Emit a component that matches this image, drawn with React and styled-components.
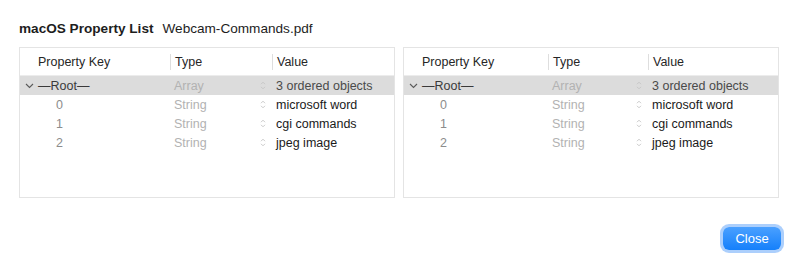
import React from 'react'
import styled, { createGlobalStyle } from 'styled-components'

const GlobalStyle = createGlobalStyle`
    html, body {
        margin: 0;
        padding: 0;
        background: #ffffff;
        font-family: "Liberation Sans", Arial, sans-serif;
        -webkit-font-smoothing: antialiased;
    }
`;

const Window = styled.div`
    width: 798px;
    height: 270px;
    box-sizing: border-box;
    background: #ffffff;
    border-radius: 10px;
    padding: 19px 19px 0 19px;
    display: flex;
    flex-direction: column;
`;

const Title = styled.div`
    display: flex;
    align-items: baseline;
    gap: 9px;
    font-size: 13.6px;
    color: #1d1d1d;
    height: 28px;
    line-height: 20px;

    b {
        font-weight: 700;
    }
`;

const Panels = styled.div`
    display: flex;
    gap: 8px;
`;

const Panel = styled.div`
    flex: 1;
    height: 151px;
    border: 1px solid #e4e4e4;
    box-sizing: border-box;
    background: #fff;
    font-size: 12.5px;
`;

const Row = styled.div`
    display: grid;
    grid-template-columns: ${p => p.$cols};
    align-items: center;
    height: 19px;
    background: ${p => p.$selected ? '#dcdcdc' : 'transparent'};
`;

const Header = styled(Row)`
    height: 28px;
    border-bottom: 1px solid #ececec;
    box-sizing: border-box;
`;

const HeadCell = styled.div`
    color: #262626;
    padding-left: ${p => p.$pad || 4}px;
    border-left: ${p => p.$sep ? '1px solid #dedede' : 'none'};
    line-height: 16px;
`;

const KeyCell = styled.div`
    display: flex;
    align-items: center;
    color: ${p => p.$root ? '#3a3a3a' : '#8c8c8c'};
    padding-left: ${p => p.$indent}px;
`;

const TypeCell = styled.div`
    display: flex;
    align-items: center;
    justify-content: space-between;
    color: #b2b2b2;
    padding: 0 6px 0 4px;
`;

const ValueCell = styled.div`
    color: ${p => p.$dim ? '#4a4a4a' : '#1a1a1a'};
    padding-left: 4px;
`;

const Chevron = styled.svg`
    width: 9px;
    height: 6px;
    margin-right: 4px;
`;

const Stepper = styled.svg`
    width: 6px;
    height: 9px;
`;

const Footer = styled.div`
    display: flex;
    justify-content: flex-end;
    padding-top: 30px;
    margin-right: -2px;
`;

const Button = styled.button`
    font-family: inherit;
    font-size: 13px;
    color: #ffffff;
    width: 58px;
    height: 23px;
    border-radius: 6px;
    border: none;
    background: linear-gradient(#4aa0ff, #1580fb);
    box-shadow: 0 0 0 3px rgba(90, 160, 250, 0.5);
    padding: 0;
    margin-top: -1px;
`;

const items = ['microsoft word', 'cgi commands', 'jpeg image'];

function StepIcon() {
    return (
        <Stepper viewBox="0 0 6 9">
            <path d="M1 3.2 L3 1.2 L5 3.2 M1 5.8 L3 7.8 L5 5.8" fill="none" stroke="#c4c4c4" strokeWidth="0.9" />
        </Stepper>
    );
}

function PlistTable({ cols }) {
    return (
        <Panel>
            <Header $cols={cols}>
                <HeadCell $pad={18}>Property Key</HeadCell>
                <HeadCell $sep>Type</HeadCell>
                <HeadCell $sep>Value</HeadCell>
            </Header>
            <Row $cols={cols} $selected>
                <KeyCell $root $indent={5}>
                    <Chevron viewBox="0 0 9 6">
                        <path d="M1 1 L4.5 4.5 L8 1" fill="none" stroke="#5a5a5a" strokeWidth="1.1" />
                    </Chevron>
                    —Root—
                </KeyCell>
                <TypeCell>Array<StepIcon /></TypeCell>
                <ValueCell $dim>3 ordered objects</ValueCell>
            </Row>
            {items.map((v, i) => (
                <Row $cols={cols} key={i}>
                    <KeyCell $indent={36}>{i}</KeyCell>
                    <TypeCell>String<StepIcon /></TypeCell>
                    <ValueCell>{v}</ValueCell>
                </Row>
            ))}
        </Panel>
    );
}

export default function App() {
    return (
        <>
            <GlobalStyle />
            <Window>
                <Title>
                    <b>macOS Property List</b>
                    <span>Webcam-Commands.pdf</span>
                </Title>
                <Panels>
                    <PlistTable cols="150px 102px 1fr" />
                    <PlistTable cols="144px 100px 1fr" />
                </Panels>
                <Footer>
                    <Button>Close</Button>
                </Footer>
            </Window>
        </>
    )
}
